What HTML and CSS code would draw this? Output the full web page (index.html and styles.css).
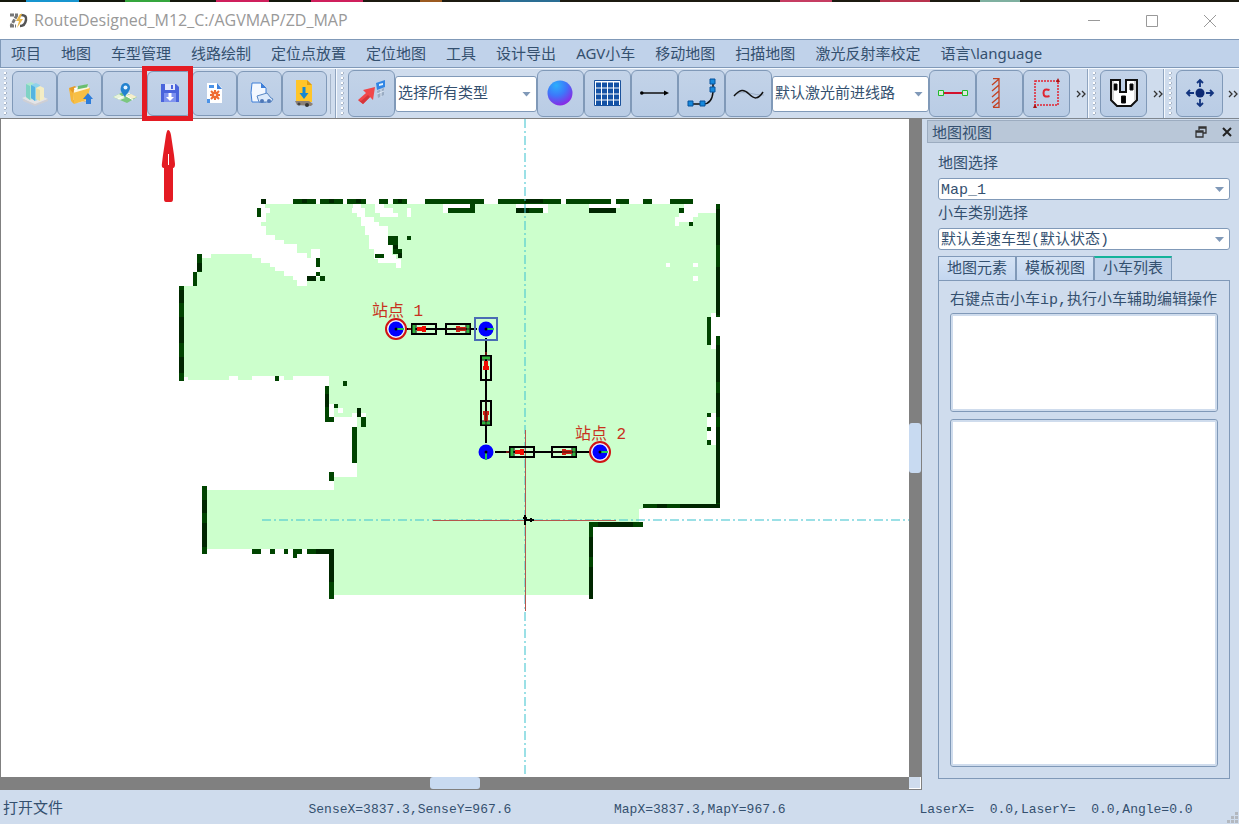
FILE: index.html
```html
<!DOCTYPE html>
<html lang="zh-CN">
<head>
<meta charset="utf-8">
<title>RouteDesigned_M12_C:/AGVMAP/ZD_MAP</title>
<link rel="stylesheet" href="styles.css">
</head>
<body>
<div class="backdrop"></div>
<header class="titlebar">
  <svg class="logo" width="20" height="18" viewBox="0 0 20 18"><path d="M2 3h8M9 3L3 14M2 14h6" fill="none" stroke="#777" stroke-width="3" stroke-dasharray="4 1"/><path d="M13 3q6 0 5 5-1 6-6 6" fill="none" stroke="#555" stroke-width="2.500"/><path d="M12 2l-4 7h3l-2 7 6-9h-3l2-5z" fill="#e9b74a"/></svg>
  <h1>RouteDesigned_M12_C:/AGVMAP/ZD_MAP</h1>
  <div class="winbtns">
    <button aria-label="最小化"><svg width="12" height="12"><path d="M0 5.500h12" stroke="#999"/></svg></button>
    <button aria-label="最大化"><svg width="12" height="12"><path d="M.5.5h11v11H.5z" fill="none" stroke="#999"/></svg></button>
    <button aria-label="关闭"><svg width="12" height="12"><path d="M0 0l12 12M12 0L0 12" stroke="#999"/></svg></button>
  </div>
</header>
<nav class="menubar">
  <button>项目</button><button>地图</button><button>车型管理</button><button>线路绘制</button><button>定位点放置</button><button>定位地图</button><button>工具</button><button>设计导出</button><button>AGV小车</button><button>移动地图</button><button>扫描地图</button><button>激光反射率校定</button><button>语言\language</button>
</nav>
<div class="toolbar">
  <div class="group small">
    <i class="grip"></i>
    <button class="tool" aria-label="新建"><svg width="28" height="28" viewBox="0 0 28 28"><path d="M1 19l13-5 13 6-13 6z" fill="#e4e4e6"/><path d="M2 20l12 5v2L2 22zM27 20l-13 5v2l13-5z" fill="#cfcfd4"/><path d="M5 5l5-2 4 2v14l-5 2-4-3z" fill="#aee6cf"/><path d="M5 5l4 2v14l-4-3z" fill="#7fd3c5"/><path d="M10 6l5-2 4 2v14l-5 2-4-3z" fill="#8fd3ec"/><path d="M10 6l4 2v14l-4-3z" fill="#55b4e0"/><path d="M15 9l4-2 4 2v11l-4 2-4-2z" fill="#f4edc4"/><path d="M15 9l4 2v11l-4-2z" fill="#e8dfa8"/></svg></button>
    <button class="tool" aria-label="打开"><svg width="28" height="28" viewBox="0 0 28 28"><path d="M3 9l6-2 2 2 10-3 1 16-15 2z" fill="#e59b27"/><path d="M8 9l14-4 1 16-12 3z" fill="#fff"/><path d="M12 7l10-2-1 5-10 3z" fill="#69bd70"/><path d="M8 11l15-3v13H7z" fill="#fff7df"/><path d="M7 14l17-5-3 12-13 4z" fill="#f7bf45"/><path d="M3 9l4 5 1 11-3-3z" fill="#f4b63b"/><path d="M22 14l5 6h-2v5h-5v-5h-3z" fill="#2d7dda"/></svg></button>
    <button class="tool" aria-label="地图"><svg width="28" height="28" viewBox="0 0 28 28"><path d="M2 18l10-5 14 5-10 6z" fill="#7bc77f"/><path d="M2 18l6-3 6 4-5 2z" fill="#e8f3dc"/><path d="M14 17l6-2 6 3-5 2z" fill="#f7efcb"/><path d="M7 20l12-6M12 15l10 6" stroke="#fff"/><path d="M14 18C10 13 9 11 10 8a4.500 4.500 0 0 1 9 1c0 3-3 5-5 9z" fill="#2382cf"/><circle cx="14.500" cy="8.500" r="2" fill="#e5f3ff"/></svg></button>
    <span class="marked">
      <button class="tool" aria-label="保存"><svg width="28" height="28" viewBox="0 0 28 28"><path d="M5 5h15l3 3v15H5z" fill="#4a64dc"/><path d="M9 5h10v6H9z" fill="#dfe6fb"/><path d="M15 6h2v4h-2z" fill="#4a64dc"/><path d="M8 14h12v9H8z" fill="#7f93ef"/><path d="M12.500 14h3v4H18l-4 4-4-4h2.500z" fill="#fff"/></svg></button>
      <svg class="callout" width="52" height="138" viewBox="0 0 52 138"><path d="M2.500 2.500h46v50h-46z" fill="none" stroke="#e41b23" stroke-width="5"/><path d="M26 64q2 0 3 5l3 20 1 9q0 4-2 4v31q0 3-2 3h-5q-2 0-2-3v-31q-3 0-2-5l1-8 3-20q1-5 2-5z" fill="#e41b23"/><path d="M26.500 88v11" stroke="#fff"/></svg>
    </span>
    <button class="tool" aria-label="设置文件"><svg width="28" height="28" viewBox="0 0 28 28"><path d="M6 4h10l5 5v15H6z" fill="#fff"/><path d="M16 4v6h5z" fill="#3c82df"/><path d="M8 6h5v3H8zM6 20h3v4H6z" fill="#4b93e8"/><path d="M14 11v10M9 16h10M10 12l8 8M18 12l-8 8" stroke="#ef6c35" stroke-width="2"/><circle cx="14" cy="16" r="3.500" fill="#ef6c35"/><circle cx="14" cy="16" r="1" fill="#fff"/></svg></button>
    <button class="tool" aria-label="导出车型"><svg width="28" height="28" viewBox="0 0 28 28"><path d="M6 4h9l5 5v14H6q-2-9 0-19z" fill="#f3f8ff" stroke="#3e7fd8"/><path d="M15 4v5h5z" fill="#3e7fd8"/><path d="M11 17l10-3 4 5 2 1-2 3H13z" fill="#dceafb" stroke="#5a88c4"/><circle cx="16" cy="22" r="2" fill="#4e78b8"/><circle cx="23" cy="22" r="2" fill="#4e78b8"/></svg></button>
    <button class="tool" aria-label="下载"><svg width="28" height="28" viewBox="0 0 28 28"><path d="M5 1h11l5 5v17H5z" fill="#ffc529"/><path d="M16 1v5h5z" fill="#dd9b13"/><path d="M11.500 8h3v6h3l-4.500 6-4.500-6h3z" fill="#1787d2"/><path d="M4 22h14l4 3-2 2-14-1z" fill="#8a8078"/><circle cx="8" cy="25" r="1.500" fill="#444"/><circle cx="16" cy="26" r="2" fill="#333"/></svg></button>
    <i class="rule"></i>
  </div>
  <div class="group wide">
    <i class="grip"></i>
    <button class="tool" aria-label="选择"><svg width="30" height="30" viewBox="0 0 30 30"><path d="M1 22l8-7-3-3 12-3-2 13-3-3-7 7z" fill="#f0474a"/><path d="M1 22l5 4 7-7-2-2-7 6z" fill="#d5353a"/><path d="M19 5l9-3v7l-8 3z" fill="#3186e5"/><path d="M22 6l4-1v2l-4 1z" fill="#e2f3ff"/><path d="M20 13l7-3v7l-6 3z" fill="#9aacc3"/><path d="M20 16l7-3M24 11v8" stroke="#dce7f5"/></svg></button>
    <label class="combo kind"><select aria-label="类型"><option>选择所有类型</option></select></label>
    <button class="tool" aria-label="球体"><svg width="28" height="28" viewBox="0 0 28 28"><defs><radialGradient id="ball" cx=".35" cy=".2" r=".9"><stop offset="0" stop-color="#2cb0fb"/><stop offset=".45" stop-color="#3d78fa"/><stop offset="1" stop-color="#9a18e0"/></radialGradient></defs><circle cx="13" cy="14" r="12.500" fill="url(#ball)"/></svg></button>
    <button class="tool" aria-label="网格"><svg width="28" height="28" viewBox="0 0 28 28"><path d="M.5 1.500h26v25H.5z" fill="#fff" stroke="#1b529c"/><path d="M2 6h23M2 12h23M2 18h23M2 24h23" stroke="#1452a5" stroke-width="5" stroke-dasharray="5 1"/></svg></button>
    <button class="tool" aria-label="直线"><svg width="30" height="28" viewBox="0 0 30 28"><path d="M1 14h24" stroke="#111" stroke-width="1.500"/><circle cx="1.800" cy="14" r="1.800"/><path d="M29 14l-5-2.500v5z"/></svg></button>
    <button class="tool" aria-label="曲线"><svg width="30" height="30" viewBox="0 0 30 30"><path d="M4 26h12q9 0 10-12V4" fill="none" stroke="#111" stroke-width="1.500"/><path d="M1 23h5v5H1zM13 23h5v5h-5zM23 9h5v5h-5zM23 1h5v5h-5z" fill="#1689dc" stroke="#07539c"/></svg></button>
    <button class="tool" aria-label="样条"><svg width="32" height="28" viewBox="0 0 32 28"><path d="M1 16q8-4 15-2t15 2" fill="none" stroke="#9eb0c8"/><path d="M1 17C7 10 11 10 16 15s9 6 14-2" fill="none" stroke="#111" stroke-width="1.500"/></svg></button>
    <label class="combo route"><select aria-label="线路"><option>默认激光前进线路</option></select></label>
    <button class="tool" aria-label="线段"><svg width="30" height="28" viewBox="0 0 30 28"><path d="M5 14h20" stroke="#d3122d" stroke-width="2"/><path d="M.5 11.500h5v5h-5zM24.500 11.500h5v5h-5z" fill="#dbe9dd" stroke="#20bb2a"/></svg></button>
    <button class="tool" aria-label="墙体"><svg width="18" height="30" viewBox="0 0 18 30"><path d="M2 .5h6v29H2M8 1L1 7M8 7l-7 6M8 13l-7 6M8 19l-7 6M8 24l-6 5" fill="none" stroke="#c34122" stroke-width="1.300"/></svg></button>
    <button class="tool" aria-label="区域"><svg width="28" height="30" viewBox="0 0 28 30"><path d="M2 3h23v24H2z" fill="none" stroke="#e22331" stroke-width="1.500" stroke-dasharray="2 1"/><path d="M25 0l2 4h-4zM2 26l2 4H0z" fill="#a11"/><path d="M16.500 12q-6-2-6 3t6 3" fill="none" stroke="#df2631" stroke-width="2"/></svg></button>
    <button class="more" aria-label="更多"><svg width="10" height="8"><path d="M1 1l3 3-3 3M6 1l3 3-3 3" fill="none" stroke="#333" stroke-width="1.300"/></svg></button>
  </div>
  <div class="group wide third">
    <i class="grip"></i>
    <button class="tool" aria-label="插座"><svg width="30" height="30" viewBox="0 0 30 30"><path d="M2 2h9v12h6V2h11v20l-6 6H8l-6-6z" fill="#fff" stroke="#111" stroke-width="2"/><path d="M5 6h3v6H5zM21 6h3v6h-3zM12.500 18h4v7h-4z" stroke="#111"/><path d="M4 3v19M26 3v19" stroke="#aaa"/></svg></button>
    <button class="more" aria-label="更多"><svg width="10" height="8"><path d="M1 1l3 3-3 3M6 1l3 3-3 3" fill="none" stroke="#333" stroke-width="1.300"/></svg></button>
  </div>
  <div class="group wide last">
    <i class="grip"></i>
    <button class="tool" aria-label="移动"><svg width="30" height="30" viewBox="0 0 30 30"><circle cx="15" cy="15" r="4.500" fill="#0d2a73"/><path d="M15 9V2m-3 3l3-3 3 3M15 21v7m-3-3l3 3 3-3M9 15H2m3-3l-3 3 3 3M21 15h7m-3-3l3 3-3 3" fill="none" stroke="#12347f" stroke-width="1.800"/></svg></button>
    <button class="more" aria-label="更多"><svg width="10" height="8"><path d="M1 1l3 3-3 3M6 1l3 3-3 3" fill="none" stroke="#333" stroke-width="1.300"/></svg></button>
  </div>
</div>
<main class="work">
  <section class="view">
    <svg class="canvas" role="img" aria-label="地图画布">
      <g transform="translate(-1 -119)">
        <path class="free" shape-rendering="crispEdges" d="M265 204H716V505H643V509H639V522H589V595H334V549H207V490H334V477H357V417H329V376H293V380H284V376H252V380H238V376H229V380H188V377H184V286H197V263H202V258H211V254H252V258H261V263H270V267H275V271H284V276H293V280H297V286H307V277H320V249H311V258H307V253H297V244H284V240H275V235H266V226H261V222H266V213H270V208H265Z"/>
        <g transform="translate(170 190) scale(.333333)" shape-rendering="crispEdges">
          <path class="blank" d="M549 42h24v12h13v28h27v13h15v13h25v30h14v56h12v13h14v26h-14v-14h-54v-13h-14v-30h-13v-40h-13v-27h-13v-28h-12v-13h-14zM615 42h27v12h27v14h14v14h-54v-14h-14zM711 55h11v25h-11z"/>
          <path class="wall" d="M274 27h14v14h-14zM261 54h12v27h-12zM369 27h69v14h-69zM450 27h69v14h-69zM531 27h57v14h-57zM627 27h27v14h-27zM669 27h42v14h-42zM765 27h75v14h-75zM82 192h14v54H82zM69 246h12v42H69zM27 288h15v284H27zM438 204h12v27h-12zM438 246h12v12h-12zM411 258h27v14h-27zM450 258h15v14h-15zM711 138h12v12h-12zM654 138h30v27h-30zM669 165h15v27h-15zM684 177h12v27h-12zM615 192h27v12h-27zM315 558h12v14h-12zM519 573h12v15h-12z"/>
          <path class="deep" d="M397 28h14v12h-14zM477 28h14v12h-14zM559 28h14v12h-14zM683 28h14v12h-14zM274 27h14v14h-14zM82 218h14v26H82zM28 300h13v40H28zM28 380h13v80H28zM28 500h13v50H28zM411 258h27v14h-27zM669 165h15v12h-15zM684 190h12v14h-12z"/>
        </g>
        <g transform="translate(440 190) scale(.333333)" shape-rendering="crispEdges">
          <path class="blank" d="M10 42h80v12H24v14H10zM228 42h96v26h-15V54h-81zM447 42h93v12h-93zM733 42h95v26h-54v14h-15v14h-42v12h-12V82h12V68h16zM678 219h12v12h-12zM759 219h15v12h-15zM759 258h15v14h-15zM813 370h27v68h-12v39h-15z"/>
          <path class="wall" d="M0 27h132v14H105v28H24V54h66V41H0zM174 27h189v14H174zM228 54h81v15h-81zM378 27h135v14H378zM528 27h39v14h-39zM609 27h27v14h-27zM690 27h69v14h-69zM447 54h81v15h-81zM717 54h15v15h-15zM747 96h12v12h-12zM828 42h12v339h-12zM801 381h12v84h-12zM828 438h12v513h-12z"/>
          <path class="deep" d="M255 28h54v12h-54zM228 54h40v15h-40zM447 54h81v15h-81zM828 56h12v110h-12zM828 230h12v145h-12zM828 465h12v110h-12zM828 610h12v70h-12zM828 710h12v230h-12z"/>
        </g>
        <g transform="translate(170 370) scale(.333333)" shape-rendering="crispEdges">
          <path class="blank" d="M478 102h14v38h-14zM504 114h15v15h-15zM546 129h15v12h-15zM573 129h15v12h-15z"/>
          <path class="wall" d="M465 48h12v93h15v15h-27zM492 102h12v12h-12zM561 114h12v26h-12zM573 141h15v30h-15zM546 171h15v108h-15zM477 306h15v27h-15zM96 348h15v204H96zM246 537h27v15h-27zM300 537h15v15h-15zM342 537h12v15h-12zM369 537h27v15h-15v12h-12zM411 537h81v150h-15V552h-66z"/>
          <path class="deep" d="M465 72h12v40h-12zM561 114h12v26h-12zM96 390h15v40H96zM96 460h15v70H96zM438 537h54v100h-15v-85h-39z"/>
        </g>
        <g transform="translate(440 370) scale(.333333)" shape-rendering="crispEdges">
          <path class="blank" d="M801 129h27v96h-27z"/>
          <path class="wall" d="M801 129h12v12h-12zM801 171h12v12h-12zM801 210h12v15h-12zM609 402h231v12H609zM447 456h162v15H459v216h-12z"/>
          <path class="deep" d="M650 402h30v12h-30zM720 402h120v12H720zM473 456h106v15H473zM447 500h12v60h-12zM447 590h12v96h-12z"/>
        </g>
        <path class="guide" d="M525 119V777M262 520H910"/>
        <path class="axis" d="M525.500 430V611M433 520.500H616"/>
        <path d="M525 515v10M523 518h4M525 520h9M531 518v4" stroke="#000" stroke-width="2" fill="none"/>
        <path d="M396 329H477M486 338V443M495 452H591" stroke="#000" stroke-width="2"/>
        <defs>
          <g id="cart"><path d="M-12-5H12V5H-12z" fill="none" stroke="#000" stroke-width="2"/><path d="M-10-4v8" stroke="#2fb53c" stroke-width="3"/><path d="M-8-5V5" stroke="#000"/><path d="M-7-2h5v-1h4v6h-4v-1h-5z" fill="#f00b00"/><path d="M-16 0h3" stroke="#d22"/></g>
          <g id="cart-back"><path d="M-12-5H12V5H-12z" fill="none" stroke="#000" stroke-width="2"/><path d="M10-4v8" stroke="#2fb53c" stroke-width="3"/><path d="M8-5V5" stroke="#000"/><path d="M-2-3h4v1h6v4h-6v1h-4z" fill="#d31d12"/><path d="M-12 0h24" stroke="#301010"/></g>
          <g id="node"><circle r="7.500" fill="#00f"/><path d="M0 0h8" stroke="#22c552" stroke-width="2"/><circle r="1.500"/></g>
          <g id="stop"><circle r="10" fill="#eef" stroke="#d01414" stroke-width="2"/><use href="#node"/></g>
        </defs>
        <use href="#cart" x="424" y="329"/><use href="#cart-back" x="458" y="329"/>
        <use href="#cart" transform="translate(486 368) rotate(90)"/><use href="#cart-back" transform="translate(486 413) rotate(90)"/>
        <use href="#cart" x="522" y="452"/><use href="#cart-back" x="564" y="452"/>
        <use href="#stop" x="396" y="329"/><use href="#stop" x="600" y="452"/>
        <use href="#node" x="486" y="329"/><use href="#node" transform="translate(486 452) rotate(90)"/>
        <path d="M475 318h22v22h-22z" fill="none" stroke="#4a6cb4" stroke-width="2"/>
        <text class="station" x="372" y="316">站点 1</text>
        <text class="station" x="575" y="439">站点 2</text>
      </g>
    </svg>
    <div class="track vertical"><i></i></div>
    <div class="track horizontal"><i></i></div>
    <div class="corner"></div>
  </section>
  <aside class="dock">
    <header class="dock-head">
      <h2>地图视图</h2>
      <button aria-label="浮动"><svg width="12" height="12" viewBox="0 0 12 12"><path d="M4 4V1h7v6H8M4 2h7M1 5h7v6H1zM1 6h7" fill="none" stroke="#333" stroke-width="1.300"/></svg></button>
      <button aria-label="关闭面板"><svg width="10" height="10"><path d="M1 1l8 8M9 1L1 9" stroke="#222" stroke-width="2"/></svg></button>
    </header>
    <div class="dock-body">
      <label for="map">地图选择</label>
      <div class="combo"><select id="map"><option>Map_1</option></select></div>
      <label for="car">小车类别选择</label>
      <div class="combo"><select id="car"><option>默认差速车型(默认状态)</option></select></div>
      <div class="tabs" role="tablist">
        <button role="tab">地图元素</button><button role="tab">模板视图</button><button role="tab" class="active" aria-selected="true">小车列表</button>
      </div>
      <div class="pane" role="tabpanel">
        <p>右键点击小车ip,执行小车辅助编辑操作</p>
        <div class="list short"></div>
        <div class="list tall"></div>
      </div>
    </div>
  </aside>
</main>
<footer class="status">
  <span class="hint">打开文件</span><span>SenseX=3837.3,SenseY=967.6</span><span>MapX=3837.3,MapY=967.6</span><span>LaserX=  0.0,LaserY=  0.0,Angle=0.0</span>
  <svg class="resize" width="12" height="12"><path d="M8 0h3v3H8zM4 4h3v3H4zM8 4h3v3H8zM0 8h3v3H0zM4 8h3v3H4zM8 8h3v3H8z" fill="#b3b8bf"/></svg>
</footer>
</body>
</html>
```
FILE: styles.css
```css
:root {
  --ink: #34506f;
  --edge: #8099b8;
  --face: #cfdced;
  --ui: "Open Sans", "Noto Sans CJK SC", sans-serif;
  --menu: "Noto Sans", "Noto Sans CJK SC", sans-serif;
  --mono: "Liberation Mono", "Noto Sans CJK SC", monospace;
}
* { box-sizing: border-box; }
body {
  margin: 0;
  height: 100vh;
  display: flex;
  flex-direction: column;
  overflow: hidden;
  background: var(--face);
  color: var(--ink);
  font: 15px/20px var(--mono);
}
button, select { font: inherit; color: inherit; }
button { padding: 0; border: 0; background: none; }
h1, h2, p { margin: 0; font-weight: 400; }
svg { display: block; flex: none; }

.backdrop {
  flex: none;
  height: 2px;
  background: linear-gradient(90deg, #14180c 0 26px, #1795cf 26px 79px, #14180c 79px 125px, #35a63e 125px 170px, #14180c 170px 216px, #cf1f5c 216px 269px, #14180c 269px 311px, #cf1f5c 311px 363px, #1c1a10 363px 420px, #9b5a20 420px 442px, #1c1a10 442px 500px, #2a6d93 500px 560px, #1c1a10 560px 780px, #c63c62 780px 832px, #1c1a10 832px 880px, #b8324e 880px 930px, #1c1a10 930px 980px, #7fb0a0 980px 1020px, #1c1a10 1020px);
}
.titlebar {
  flex: none;
  height: 37px;
  display: flex;
  align-items: center;
  gap: 6px;
  padding-left: 8px;
  background: #fff;
}
.titlebar h1 { flex: 1; padding-bottom: 2px; color: #999; font: 16px/22px var(--ui); }
.winbtns { display: flex; }
.winbtns button { width: 58px; height: 37px; display: grid; place-items: center; }

.menubar {
  flex: none;
  height: 29px;
  display: flex;
  border: 1px solid var(--edge);
  border-right: 0;
  background: #c0d2ea;
}
.menubar button { padding: 0 10px 2px; font-family: var(--menu); white-space: nowrap; }

.toolbar {
  flex: none;
  height: 51px;
  display: flex;
  border-bottom: 1px solid #7f8790;
  border-top: 1px solid #f5f9fe;
  background: var(--face);
}
.group { display: flex; align-items: center; padding-left: 4px; }
.group + .group { border-left: 1px solid #f5f9fe; box-shadow: -1px 0 #8fa4bf; }
.wide { flex: none; }
.grip {
  width: 3px;
  height: 44px;
  margin-right: 4px;
  background: radial-gradient(circle at 1px 1px, #fff 0 1px, #a9b6c8 1px 2px, transparent 2px) 0 0 / 4px 5px;
}
.small .grip { margin-right: 5px; }
.tool {
  width: 47px;
  height: 47px;
  display: grid;
  place-items: center;
  border: 1px solid var(--edge);
  border-radius: 6px;
  background: linear-gradient(#c3d3e8, #b9cce5);
}
.small .tool { width: 45px; height: 45px; }
.tool svg { margin-bottom: 2px; }
.rule { width: 1px; height: 40px; margin: 0 5px 0 3px; background: #a5b5ca; }
.marked { position: relative; }
.callout { position: absolute; left: -5px; top: -5px; z-index: 5; pointer-events: none; }
.more { width: 18px; display: grid; place-items: center; padding-left: 4px; }
.third .more { width: 17px; }
.last .more { width: 15px; }

.combo {
  position: relative;
  display: block;
}
.combo::after {
  content: "";
  position: absolute;
  right: 6px;
  top: 50%;
  width: 9px;
  height: 5px;
  margin-top: -2px;
  background: #8099b8;
  clip-path: polygon(0 0, 100% 0, 50% 100%);
  pointer-events: none;
}
.combo select {
  display: block;
  width: 100%;
  height: 22px;
  padding: 2px 2px 0;
  border: 1px solid var(--edge);
  border-radius: 3px;
  background: #fff;
  appearance: none;
}
.group .combo select { height: 36px; }
.kind { width: 142px; }
.route { width: 157px; }

.work { flex: 1; min-height: 0; display: flex; }
.view {
  flex: 1;
  min-width: 0;
  display: grid;
  grid-template: 1fr 12px / 1fr 12px;
  border: 1px solid #808080;
  margin-top: -1px;
}
.canvas { width: 100%; height: 100%; overflow: hidden; background: #fff; }
.track { display: grid; place-items: center; background: #808080; }
.track i { background: #c8daf1; border-radius: 3px; }
.vertical i { width: 12px; height: 50px; }
.horizontal i { width: 50px; height: 12px; }
.corner { background: var(--face); border: solid #fff; border-width: 0 1px 1px 0; }
.free { fill: #cfc; }
.blank { fill: #fff; }
.wall { fill: #004400; }
.deep { fill: #002600; }
.guide { fill: none; stroke: #48c6d2; stroke-opacity: .55; stroke-width: 2; stroke-dasharray: 9 3 2 3; }
.axis { fill: none; stroke: #b4564c; }
.station { fill: #c8321e; font-size: 16px; }

.dock { flex: none; width: 317px; display: flex; flex-direction: column; padding-left: 5px; }
.dock-head {
  flex: none;
  height: 23px;
  margin-top: 1px;
  display: flex;
  align-items: center;
  gap: 15px;
  padding: 0 7px 0 4px;
  border: 1px solid #9cacc0;
  border-right: 0;
  background: #b9c7d8;
}
.dock-head h2 { flex: 1; font: 15px/20px var(--ui); }
.dock-body { flex: 1; min-height: 0; display: flex; flex-direction: column; padding: 12px 9px 11px 11px; }
.dock-body > label { margin-bottom: 3px; }
.dock-body > .combo + label { margin-top: 5px; }
.tabs { display: flex; margin-top: 6px; }
.tabs button {
  width: 78px;
  height: 24px;
  padding-top: 2px;
  border: 1px solid var(--edge);
  border-bottom: 0;
  background: linear-gradient(#d5e3f5, #c3d6ef);
}
.tabs .active { border-top: 2px solid #14b39a; background: #bfd1e9; }
.pane {
  flex: 1;
  min-height: 0;
  display: flex;
  flex-direction: column;
  padding: 10px 11px 11px;
  border: 1px solid var(--edge);
}
.pane p { white-space: nowrap; margin-bottom: 2px; }
.list { border: 1px solid var(--edge); border-radius: 3px; background: #fff; box-shadow: inset 0 0 0 2px var(--face); }
.short { flex: none; height: 99px; margin-bottom: 7px; }
.tall { flex: 1; }

.status {
  flex: none;
  position: relative;
  height: 34px;
  display: grid;
  grid-template-columns: repeat(4, 1fr);
  align-items: center;
  padding: 6px 14px 0 3px;
  font-size: 13px;
  white-space: pre;
}
.hint { font-size: 15px; }
.resize { position: absolute; right: 0; bottom: 0; }
```
